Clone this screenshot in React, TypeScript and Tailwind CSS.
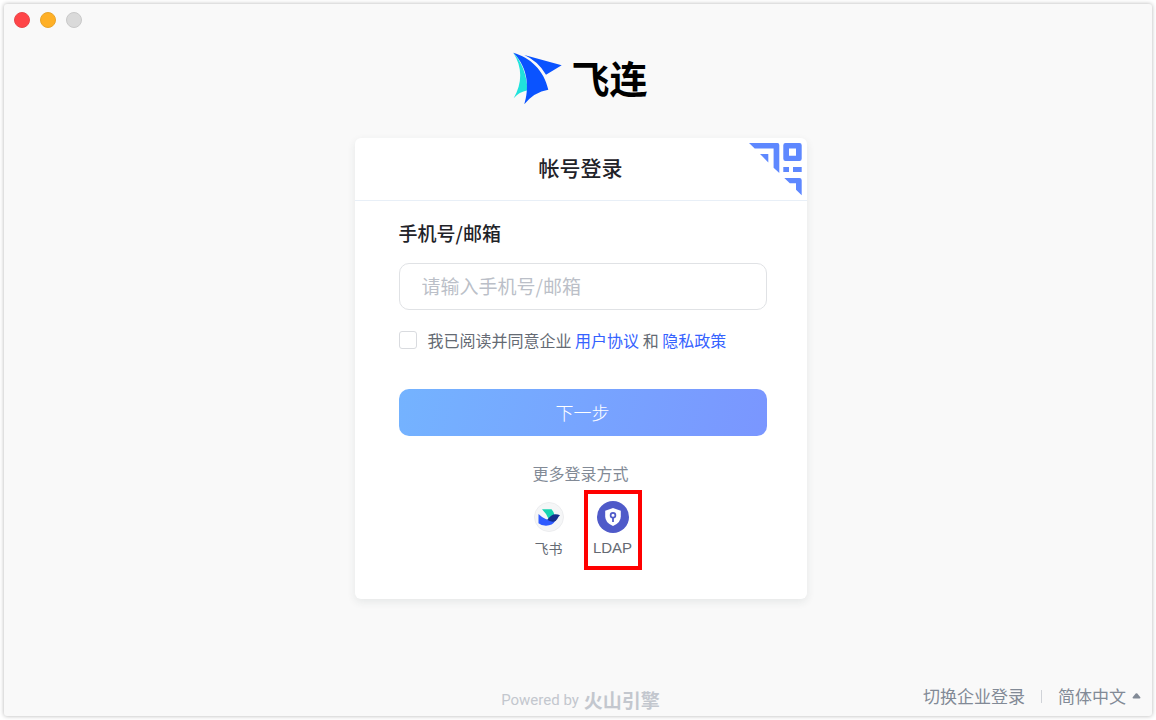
import React from "react";

function FeilianMark() {
  return (
    <svg width="50" height="54" viewBox="0 0 50 54" aria-hidden="true">
      <path d="M0.3 0.7C8 9 14 22 14.5 38.300Q6 40 0.7 46.2C9.500 31 9.500 15 0.3 0.7Z" fill="#20E3DC" />
      <path d="M0.3 0.7C17 5.500 31 18 35.300 37.700Q21 40 11.300 52.300C15.800 38 16.500 17 0.3 0.7Z" fill="#0A53FF" />
      <path d="M11.300 3L48.700 13.300L33 22.700Q25 9 11.300 3Z" fill="#0A53FF" />
    </svg>
  );
}

function QrCorner() {
  return (
    <svg width="55" height="55" viewBox="0 0 55 55" fill="#5E88FF" aria-hidden="true">
      <path d="M1 1H29.500Q31.300 1 31.300 3V31L25.600 25.700V6.400H6.700Z" />
      <path d="M12 12H20.300V20.400Z" />
      <path
        fillRule="evenodd"
        d="M37.500 1H51.500Q53.700 1 53.700 3.200V16.800Q53.700 19 51.500 19H37.500Q35.300 19 35.300 16.800V3.200Q35.300 1 37.500 1ZM41 6.400V13.700H48V6.400Z"
      />
      <path d="M35.300 25H41V30H35.300ZM45 25H53.700V30H45Z" />
      <path d="M36.300 36H51.500Q53.700 36 53.700 38.200V53.300L48 47.800V41.300H41.800Z" />
    </svg>
  );
}

function FeishuIcon() {
  return (
    <svg width="30" height="30" viewBox="0 0 30 30" aria-hidden="true">
      <circle cx="15" cy="15" r="14.500" fill="#F5F6F7" stroke="#ECEDEF" />
      <path d="M8 7.300H17.500Q19.800 9.800 20.600 13.200L14.800 17.500Q12.500 11.500 8 7.300Z" fill="#17D3B1" />
      <path d="M4.500 12Q10.500 18 19 18.800L21.500 18.500Q18.500 23.700 12 23.700Q7 23.500 4.500 21.200Z" fill="#2F5BFF" />
      <path d="M13.300 17.800Q17 12.200 21.500 12.200Q24 12.200 26 13.200Q24.500 14.500 23.300 17Q21.500 20.300 18.500 19.800Q15.500 19.300 13.300 17.800Z" fill="#142F8C" />
    </svg>
  );
}

function LdapIcon() {
  return (
    <svg width="32" height="32" viewBox="0 0 32 32" aria-hidden="true">
      <circle cx="16" cy="16" r="16" fill="#4F5AC9" />
      <path d="M16 7L23.800 9.800V15.500Q23.800 21.800 16 25Q8.200 21.800 8.200 15.500V9.800Z" fill="#FFFFFF" />
      <circle cx="16" cy="14.300" r="2.400" fill="none" stroke="#4F5AC9" strokeWidth="1.700" />
      <path d="M16 16.500V21" stroke="#4F5AC9" strokeWidth="1.800" />
    </svg>
  );
}

function TitleBar() {
  return (
    <div className="flex gap-[10px] px-[10px] pt-2">
      <button aria-label="关闭" className="size-4 rounded-full border border-[#e9474a] bg-[#ff4548]" />
      <button aria-label="最小化" className="size-4 rounded-full border border-[#e9a42b] bg-[#ffb026]" />
      <button aria-label="缩放" disabled className="size-4 rounded-full border border-[#c9c9c9] bg-[#dadada]" />
    </div>
  );
}

function LoginCard() {
  return (
    <main className="relative w-full max-w-[452px] rounded-md bg-white shadow-[0_3px_8px_rgba(30,60,50,0.09)]">
      <header className="border-b border-[#e8eff7] pt-[14px] pb-[18px]">
        <h1 className="text-center text-[21px] leading-[30px] font-medium text-[#1f2329]">帐号登录</h1>
      </header>
      <button aria-label="扫码登录" className="absolute top-1 right-1">
        <QrCorner />
      </button>
      <form className="pt-[18px] pr-10 pl-11" onSubmit={(e) => e.preventDefault()}>
        <label htmlFor="account" className="block text-[19px] leading-7 font-medium text-[#1f2329]">
          手机号/邮箱
        </label>
        <input
          id="account"
          type="text"
          placeholder="请输入手机号/邮箱"
          className="mt-4 block h-[47px] w-full rounded-[10px] border border-[#e0e2e5] bg-white px-[22px] pb-0.5 text-[19px] text-[#1f2329] outline-none placeholder:text-[#bbbfc8]"
        />
        <div className="mt-[18px] flex items-center gap-[11px] text-base leading-6 text-[#646a73]">
          <input
            id="agree"
            type="checkbox"
            className="size-[18px] shrink-0 appearance-none rounded-[3px] border border-[#d9dbdf] bg-white checked:bg-[#3370ff]"
          />
          <p>
            <label htmlFor="agree">我已阅读并同意企业</label>{" "}
            <a href="#agreement" className="text-[#3562ff]">用户协议</a> 和{" "}
            <a href="#privacy" className="text-[#3562ff]">隐私政策</a>
          </p>
        </div>
        <button
          type="submit"
          className="mt-[37px] h-[47px] w-full rounded-[10px] bg-linear-[105deg,#74b3ff,#7a96ff] text-[18px] font-light text-white"
        >
          下一步
        </button>
      </form>
      <section className="flex flex-col items-center pt-[25px] pb-[29px]">
        <h2 className="text-base leading-6 text-[#828a96]">更多登录方式</h2>
        <div className="mt-[5px] flex items-center gap-[6px]">
          <button className="flex h-20 w-[58px] flex-col items-center justify-center gap-[3px] text-[14px] leading-6 text-[#646a73]">
            <span className="flex h-8 items-center"><FeishuIcon /></span>
            飞书
          </button>
          <button className="flex h-20 w-[58px] flex-col items-center justify-center gap-[3px] border-4 border-[#ff0000] font-['Liberation_Sans',sans-serif] text-[15px] leading-6 text-[#646a73]">
            <LdapIcon />
            LDAP
          </button>
        </div>
      </section>
    </main>
  );
}

function Footer() {
  return (
    <footer className="mt-auto grid grid-cols-[1fr_auto_1fr] items-center pr-[11px] pl-4">
      <p className="col-start-2 flex items-center gap-[5px] text-[#c3c7ce]">
        <span className="font-[Roboto,sans-serif] text-[15px] leading-6">Powered by</span>
        <strong className="text-[19px] leading-6 font-bold">火山引擎</strong>
      </p>
      <div className="flex items-center justify-end pb-2 text-[17px] leading-6 text-[#828a96]">
        <button>切换企业登录</button>
        <span className="mx-4 h-[13px] w-px bg-[#d0d3d8]" />
        <select aria-label="语言" className="appearance-none bg-transparent outline-none">
          <option>简体中文</option>
        </select>
        <svg className="ml-[6px]" width="9" height="6" viewBox="0 0 9 6" fill="#828a96" aria-hidden="true">
          <path d="M3.700 0.500Q4.500 -0.200 5.300 0.500L8.300 4.200Q8.800 5.500 7.500 5.500H1.500Q0.200 5.500 0.700 4.200Z" />
        </svg>
      </div>
    </footer>
  );
}

export default function App() {
  return (
    <div className="flex min-h-screen bg-white p-1 font-['Noto_Sans_CJK_SC',sans-serif]">
      <div className="flex flex-1 flex-col rounded-[3px] bg-[#f9f9f9] shadow-[0_0_4px_rgba(0,0,0,0.3)]">
        <TitleBar />
        <div className="flex flex-col items-center pl-[5px]">
          <div className="mt-6 mb-[32px] flex items-start gap-2">
            <FeilianMark />
            <span className="text-[38px] leading-[50px] font-bold text-black">飞连</span>
          </div>
          <LoginCard />
        </div>
        <Footer />
      </div>
    </div>
  );
}
